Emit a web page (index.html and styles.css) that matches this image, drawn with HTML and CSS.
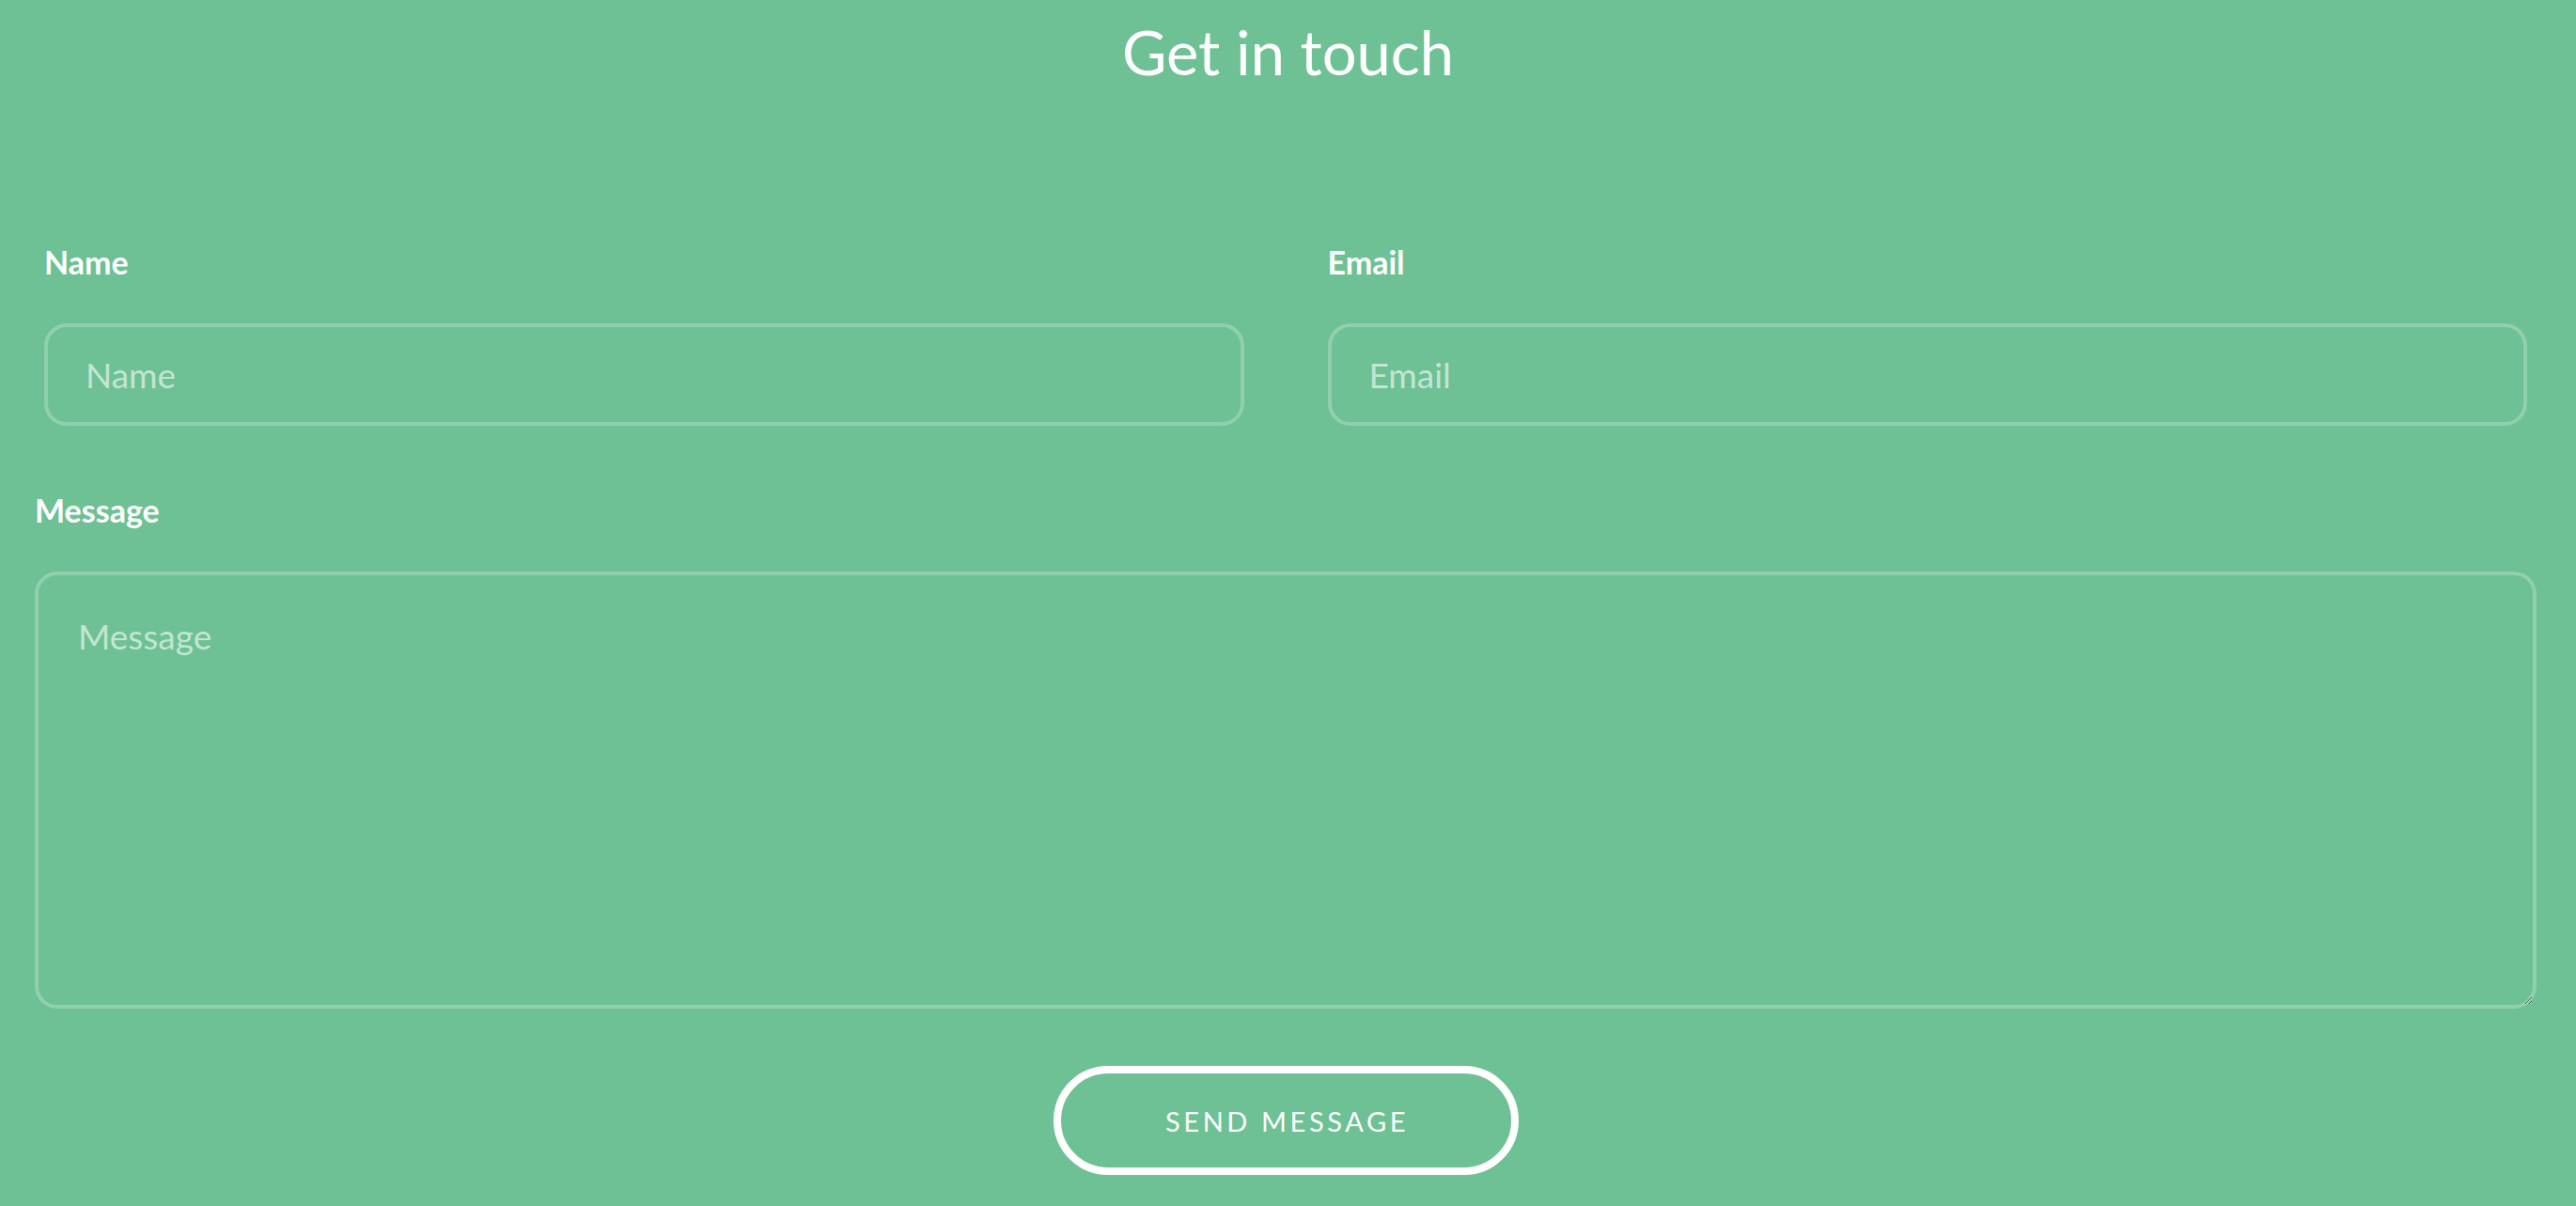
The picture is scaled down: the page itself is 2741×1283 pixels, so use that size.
FILE: index.html
```html
<!DOCTYPE html>
<html lang="en">
<head>
<meta charset="utf-8">
<title>Get in touch</title>
<link rel="stylesheet" href="styles.css">
</head>
<body>
<section class="contact">
  <h1 class="title">Get in touch</h1>
  <form class="form" onsubmit="return false;">
    <div class="row">
      <div class="field">
        <label class="label" for="name">Name</label>
        <input class="input" id="name" type="text" placeholder="Name">
      </div>
      <div class="field">
        <label class="label" for="email">Email</label>
        <input class="input" id="email" type="email" placeholder="Email">
      </div>
    </div>
    <div class="field field-message">
      <label class="label" for="message">Message</label>
      <textarea class="textarea" id="message" placeholder="Message"></textarea>
    </div>
    <div class="actions">
      <button class="button" type="submit">Send Message</button>
    </div>
  </form>
</section>
</body>
</html>
```

FILE: styles.css
```css
html, body {
  margin: 0;
  padding: 0;
  background: #6dc194;
}

body {
  font-family: "Lato", "Open Sans", sans-serif;
  color: #ffffff;
  min-height: 1283px;
}

.contact {
  padding-top: 23px;
}

.title {
  margin: 0;
  font-size: 65px;
  font-weight: 400;
  line-height: 1;
  text-align: center;
  color: #ffffff;
}

.form {
  padding: 0 42px 0 37px;
  margin-top: 174px;
}

.row {
  display: grid;
  grid-template-columns: 1fr 1fr;
  column-gap: 89px;
  padding: 0 10px;
}

.field {
  display: flex;
  flex-direction: column;
}

.label {
  display: block;
  font-size: 34px;
  font-weight: 700;
  line-height: 1;
  color: #ffffff;
  margin-bottom: 48px;
}

.input,
.textarea {
  box-sizing: border-box;
  width: 100%;
  font-family: "Lato", "Open Sans", sans-serif;
  font-size: 37px;
  color: #ffffff;
  background: transparent;
  border: 4px solid rgba(255, 255, 255, 0.25);
  border-radius: 24px;
  outline: none;
  margin: 0;
}

.input {
  height: 109px;
  padding: 0 40px;
}

.textarea {
  height: 465px;
  padding: 42px 42px;
  resize: vertical;
  display: block;
}

.input::placeholder,
.textarea::placeholder {
  color: rgba(255, 255, 255, 0.6);
}

.field-message {
  margin-top: 73px;
}

.actions {
  display: flex;
  justify-content: center;
  margin-top: 61px;
}

.button {
  box-sizing: border-box;
  width: 495px;
  height: 116px;
  border: 8px solid #ffffff;
  border-radius: 60px;
  background: transparent;
  color: #ffffff;
  font-family: "Lato", "Open Sans", sans-serif;
  font-size: 29px;
  font-weight: 400;
  letter-spacing: 3.6px;
  text-transform: uppercase;
  cursor: pointer;
  padding: 0 0 0 3px;
}
```
